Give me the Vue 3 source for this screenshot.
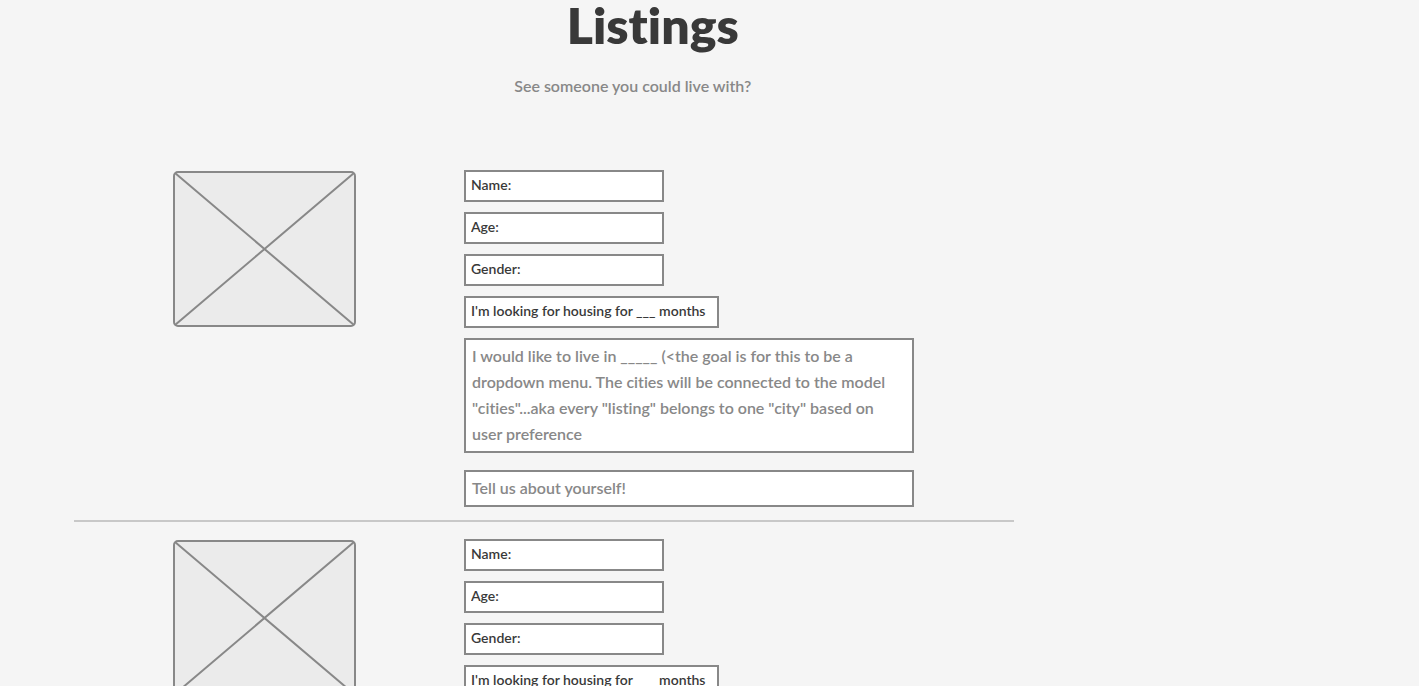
<script setup>
import { ref } from 'vue'

const cityText =
  'I would like to live in _____ (<the goal is for this to be a dropdown menu. The cities will be connected to the model "cities"...aka every "listing" belongs to one "city" based on user preference'

const makeListing = (id) => ({
  id,
  fields: [
    { key: 'name', label: 'Name', text: 'Name:' },
    { key: 'age', label: 'Age', text: 'Age:' },
    { key: 'gender', label: 'Gender', text: 'Gender:' },
    { key: 'months', label: 'Months of housing', text: "I'm looking for housing for ___ months", wide: true },
  ],
  city: cityText,
  about: 'Tell us about yourself!',
})

const listings = ref([makeListing(1), makeListing(2)])
</script>

<template>
  <main class="page">
    <header class="heading">
      <h1>Listings</h1>
      <p>See someone you could live with?</p>
    </header>

    <section class="listings">
      <article v-for="item in listings" :key="item.id" class="listing">
        <svg class="photo" viewBox="0 0 183 156" role="img" aria-label="Photo">
          <rect x="1" y="1" width="181" height="154" rx="4" />
          <path d="M2 2 181 154M181 2 2 154" />
        </svg>
        <form class="fields" @submit.prevent>
          <input
            v-for="field in item.fields"
            :key="field.key"
            v-model="field.text"
            type="text"
            class="field"
            :class="{ wide: field.wide }"
            :aria-label="field.label"
          />
          <textarea v-model="item.city" class="note city" rows="4" aria-label="City" spellcheck="false"></textarea>
          <textarea v-model="item.about" class="note" rows="1" aria-label="About you" spellcheck="false"></textarea>
        </form>
      </article>
    </section>
  </main>
</template>

<style>
body {
  margin: 0;
  background: #f5f5f5;
}
</style>

<style scoped>
.page {
  font-family: Lato, "Open Sans", sans-serif;
  font-weight: 600;
  font-variant-ligatures: none;
}

.heading {
  width: 92%;
  text-align: center;
}

h1 {
  margin: 0;
  font-size: 50px;
  font-weight: 800;
  line-height: 50px;
  color: #393939;
}

.heading p {
  margin: 23px 0 0;
  padding-right: 40px;
  font-size: 16px;
  line-height: 26px;
  color: #888;
}

.listings {
  max-width: 940px;
  margin: 71px 0 0 74px;
}

.listing {
  display: flex;
  align-items: flex-start;
  gap: 108px;
  padding: 0 100px 13px 99px;
}

.listing + .listing {
  border-top: 2px solid #c8c8c8;
  padding-top: 17px;
}

.photo {
  flex: none;
  width: 183px;
  margin-top: 1px;
  fill: #ebebeb;
  stroke: #888;
  stroke-width: 2;
}

.fields {
  flex: 1;
  min-width: 0;
  display: flex;
  flex-direction: column;
  align-items: flex-start;
  gap: 10px;
}

.field,
.note {
  box-sizing: border-box;
  margin: 0;
  border: 2px solid #888;
  border-radius: 0;
  background: #fff;
  font-family: inherit;
  font-weight: inherit;
  font-variant-ligatures: none;
}

.field {
  width: 200px;
  height: 32px;
  padding: 0 5px 3px;
  font-size: 14px;
  color: #393939;
}

.field.wide {
  width: 255px;
}

.note {
  width: 100%;
  padding: 3px 6px 4px;
  overflow: hidden;
  resize: none;
  font-size: 16px;
  line-height: 26px;
  color: #888;
}

.city {
  margin-bottom: 7px;
}
</style>
